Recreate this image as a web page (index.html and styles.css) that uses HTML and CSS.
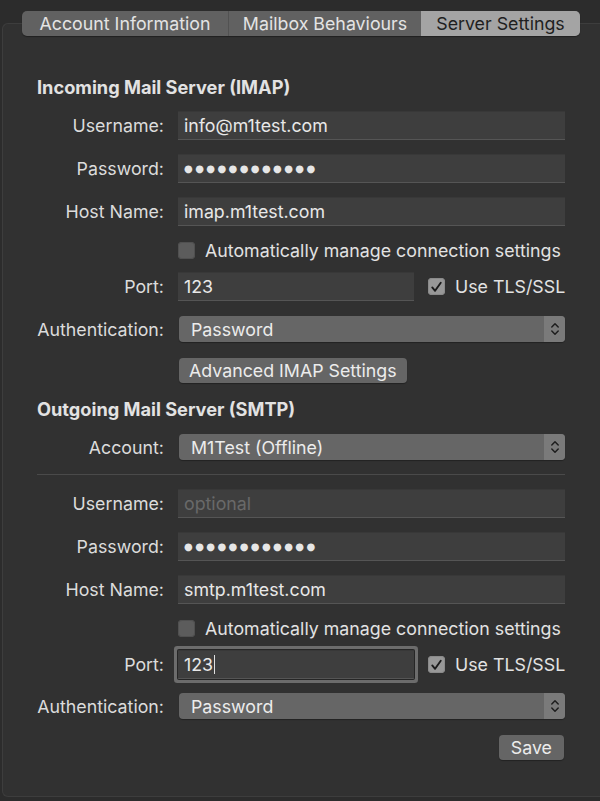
FILE: index.html
```html
<!DOCTYPE html>
<html>
<head>
<meta charset="utf-8">
<link rel="stylesheet" href="styles.css">
</head>
<body>
<div class="window">
  <div class="tabs">
    <div class="tab">Account Information</div>
    <div class="tab">Mailbox Behaviours</div>
    <div class="tab selected">Server Settings</div>
  </div>
  <div class="box">
    <div class="content">
      <div class="heading h-first">Incoming Mail Server (IMAP)</div>

      <div class="row r-field r-first">
        <div class="label">Username:</div>
        <div class="field">info@m1test.com</div>
      </div>
      <div class="row r-field">
        <div class="label">Password:</div>
        <div class="field"><span class="dots">●●●●●●●●●●●●</span></div>
      </div>
      <div class="row r-field">
        <div class="label">Host Name:</div>
        <div class="field">imap.m1test.com</div>
      </div>
      <div class="row r-check">
        <div class="label"></div>
        <div class="check">
          <span class="box-check"></span>
          <span class="check-text">Automatically manage connection settings</span>
        </div>
      </div>
      <div class="row r-field">
        <div class="label">Port:</div>
        <div class="port-line">
          <div class="field port">123</div>
          <div class="check">
            <span class="box-check on"><svg viewBox="0 0 18 18" width="18" height="18"><path d="M4.5 9.5 L7.5 13 L13.5 4.5" fill="none" stroke="#1b1b1b" stroke-width="2" stroke-linecap="round" stroke-linejoin="round"/></svg></span>
            <span class="check-text">Use TLS/SSL</span>
          </div>
        </div>
      </div>
      <div class="row r-popup r-after-field">
        <div class="label">Authentication:</div>
        <div class="popup">
          <span class="popup-text">Password</span>
          <span class="popup-arrows"><svg viewBox="0 0 10 18" width="10" height="18"><path d="M1.8 7 L5 3.8 L8.2 7 M1.8 11 L5 14.2 L8.2 11" fill="none" stroke="#1e1e1e" stroke-width="1.5" stroke-linecap="round" stroke-linejoin="round"/></svg></span>
        </div>
      </div>
      <div class="row r-button">
        <div class="label"></div>
        <div class="btn-wrap"><div class="button">Advanced IMAP Settings</div></div>
      </div>

      <div class="heading h-second">Outgoing Mail Server (SMTP)</div>
      <div class="row r-popup r-account">
        <div class="label">Account:</div>
        <div class="popup">
          <span class="popup-text">M1Test (Offline)</span>
          <span class="popup-arrows"><svg viewBox="0 0 10 18" width="10" height="18"><path d="M1.8 7 L5 3.8 L8.2 7 M1.8 11 L5 14.2 L8.2 11" fill="none" stroke="#1e1e1e" stroke-width="1.5" stroke-linecap="round" stroke-linejoin="round"/></svg></span>
        </div>
      </div>
      <div class="separator"></div>

      <div class="row r-field">
        <div class="label">Username:</div>
        <div class="field placeholder">optional</div>
      </div>
      <div class="row r-field">
        <div class="label">Password:</div>
        <div class="field"><span class="dots">●●●●●●●●●●●●</span></div>
      </div>
      <div class="row r-field">
        <div class="label">Host Name:</div>
        <div class="field">smtp.m1test.com</div>
      </div>
      <div class="row r-check">
        <div class="label"></div>
        <div class="check">
          <span class="box-check"></span>
          <span class="check-text">Automatically manage connection settings</span>
        </div>
      </div>
      <div class="row r-field">
        <div class="label">Port:</div>
        <div class="port-line">
          <div class="field port focused">123<span class="caret"></span></div>
          <div class="check">
            <span class="box-check on"><svg viewBox="0 0 18 18" width="18" height="18"><path d="M4.5 9.5 L7.5 13 L13.5 4.5" fill="none" stroke="#1b1b1b" stroke-width="2" stroke-linecap="round" stroke-linejoin="round"/></svg></span>
            <span class="check-text">Use TLS/SSL</span>
          </div>
        </div>
      </div>
      <div class="row r-popup r-after-port">
        <div class="label">Authentication:</div>
        <div class="popup">
          <span class="popup-text">Password</span>
          <span class="popup-arrows"><svg viewBox="0 0 10 18" width="10" height="18"><path d="M1.8 7 L5 3.8 L8.2 7 M1.8 11 L5 14.2 L8.2 11" fill="none" stroke="#1e1e1e" stroke-width="1.5" stroke-linecap="round" stroke-linejoin="round"/></svg></span>
        </div>
      </div>
      <div class="save-row">
        <div class="button save">Save</div>
      </div>
    </div>
  </div>
</div>
</body>
</html>
```

FILE: styles.css
```css
html, body {
  margin: 0;
  padding: 0;
  background: #2c2c2c;
  width: 600px;
  height: 801px;
  overflow: hidden;
}

body {
  font-family: "Inter", "Liberation Sans", sans-serif;
  font-size: 17.8px;
  color: #dedede;
}

.window {
  padding-top: 11px;
}

.tabs {
  position: relative;
  z-index: 1;
  margin-left: 22px;
  width: 558px;
  height: 25px;
  display: grid;
  grid-template-columns: 206px 193px 159px;
  border-radius: 5px;
  overflow: hidden;
  background: #616161;
  box-shadow: 0 1px 1px rgba(0, 0, 0, 0.35);
}

.tab {
  display: flex;
  align-items: center;
  justify-content: center;
  color: #e4e4e4;
  font-size: 17.8px;
  line-height: 25px;
  border-left: 1px solid #525252;
  white-space: nowrap;
}

.tab:first-child {
  border-left: none;
}

.tab.selected {
  background: #a4a4a4;
  color: #1f1f1f;
  border-left: none;
}

.box {
  margin-top: -13px;
  margin-left: 2px;
  width: 597px;
  height: 772px;
  border: 1px solid #3d3d3d;
  border-right: none;
  border-radius: 6px 0 0 6px;
  background: #313131;
}

.content {
  width: 528px;
  padding-left: 34px;
}

.heading {
  font-weight: 700;
  font-size: 18.2px;
  line-height: 20px;
  height: 20px;
  color: #e2e2e2;
  white-space: nowrap;
}

.h-first {
  padding-top: 53px;
}

.h-second {
  margin-top: 16px;
}

.row {
  display: grid;
  grid-template-columns: 127px 387px;
  column-gap: 14px;
  align-items: center;
}

.label {
  text-align: right;
  color: #dcdcdc;
  white-space: nowrap;
}

.r-field {
  height: 29px;
  margin-top: 14px;
}

.r-first {
  margin-top: 14px;
}

.r-check {
  height: 18px;
  margin-top: 14px;
}

.r-popup {
  height: 26px;
}

.r-after-field {
  margin-top: 15px;
}

.r-account {
  margin-top: 15px;
}

.r-after-port {
  margin-top: 14px;
}

.r-button {
  height: 25px;
  margin-top: 16px;
}

.field {
  height: 29px;
  box-sizing: border-box;
  background: #3e3e3e;
  border-bottom: 1px solid #555555;
  border-top: 1px solid #383838;
  padding-left: 6px;
  display: flex;
  align-items: center;
  color: #e8e8e8;
  white-space: nowrap;
}

.placeholder {
  color: #696969;
}

.dots {
  font-family: "DejaVu Sans", sans-serif;
  font-size: 10px;
  letter-spacing: 2.4px;
  color: #e6e6e6;
}

.port-line {
  display: flex;
  align-items: center;
}

.port {
  width: 236px;
  flex: none;
}

.port-line .check {
  margin-left: 14px;
}

.focused {
  border-radius: 1px;
  box-shadow: 0 0 0 1px #262626, 0 0 0 4px #6c6c6c;
}

.caret {
  display: inline-block;
  width: 1px;
  height: 19px;
  margin-left: 1px;
  background: #e0e0e0;
}

.check {
  display: flex;
  align-items: center;
  white-space: nowrap;
}

.box-check {
  width: 17px;
  height: 17px;
  border-radius: 4px;
  background: #5c5c5c;
  box-shadow: inset 0 0 0 1px #505050;
  display: flex;
  align-items: center;
  justify-content: center;
  flex: none;
}

.box-check.on {
  background: #989898;
  box-shadow: inset 0 0 0 1px #8a8a8a;
}

.check-text {
  margin-left: 10px;
  color: #e2e2e2;
}

.popup {
  height: 26px;
  margin-left: 1px;
  width: 386px;
  border-radius: 4px;
  background: #666666;
  display: flex;
  align-items: center;
  overflow: hidden;
  box-shadow: 0 1px 1px rgba(0, 0, 0, 0.3);
}

.popup-text {
  flex: 1;
  padding-left: 12px;
  color: #ececec;
  white-space: nowrap;
}

.popup-arrows {
  width: 21px;
  height: 26px;
  background: #7a7a7a;
  display: flex;
  align-items: center;
  justify-content: center;
}

.btn-wrap {
  display: flex;
  margin-left: 1px;
}

.button {
  height: 25px;
  padding: 0 10px;
  border-radius: 4px;
  background: #656565;
  color: #ececec;
  display: flex;
  align-items: center;
  white-space: nowrap;
  box-shadow: 0 1px 1px rgba(0, 0, 0, 0.3);
}

.save {
  padding: 0 12px;
}

.separator {
  margin-top: 14px;
  height: 1px;
  width: 528px;
  background: #4a4a4a;
}

.save-row {
  margin-top: 16px;
  width: 527px;
  display: flex;
  justify-content: flex-end;
}
```
